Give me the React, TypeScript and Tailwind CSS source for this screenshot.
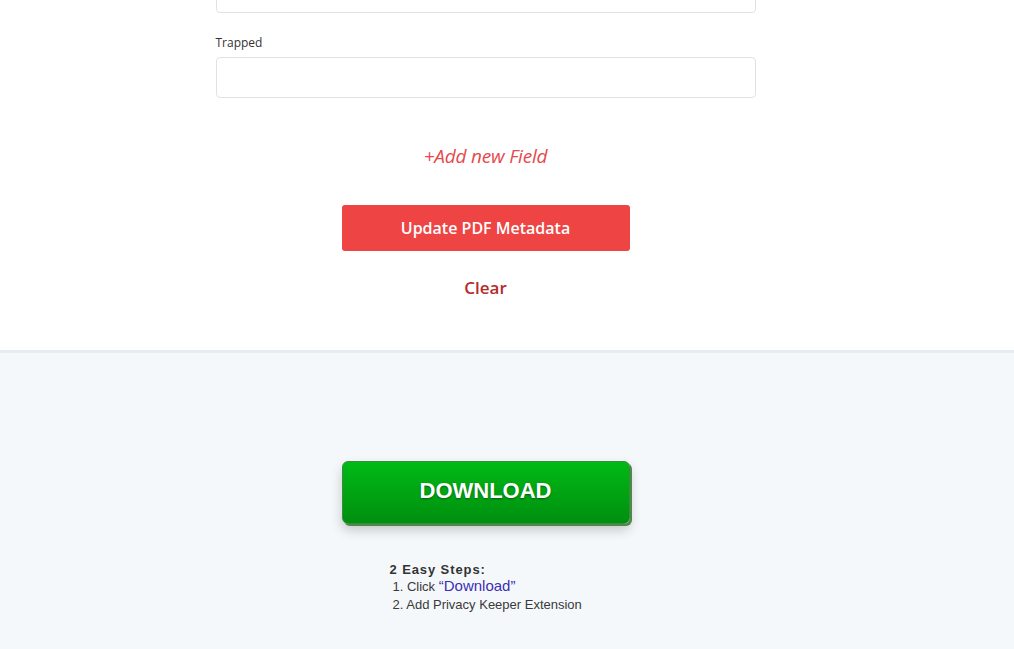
import React from "react";

export default function App() {
  return (
    <div className="w-[1014px] h-[649px] overflow-hidden bg-white">
      <div className="bg-white h-[350px] flex flex-col items-center pr-[43px]">
        <div className="w-[540px] mt-[-28px] h-[41px] border border-[#dee2e6] rounded-[4px] bg-white" />
        <div className="w-[540px] mt-[22px] text-[12px] leading-[16px] text-[#333] font-['Open_Sans',sans-serif]">
          Trapped
        </div>
        <div className="w-[540px] mt-[6px] h-[41px] border border-[#dee2e6] rounded-[4px] bg-white" />
        <div className="mt-[46px] text-[19px] leading-[24px] italic font-medium text-[#e5484d] font-['Open_Sans',sans-serif] tracking-[-0.2px]">
          +Add new Field
        </div>
        <button className="mt-[37px] w-[288px] h-[46px] rounded-[3px] bg-[#ef4444] text-white text-[16px] font-semibold font-['Open_Sans',sans-serif]">
          Update PDF Metadata
        </button>
        <div className="mt-[25px] text-[17px] leading-[24px] font-semibold text-[#b52a2a] font-['Open_Sans',sans-serif]">
          Clear
        </div>
      </div>
      <div className="h-[3px] bg-[#e6ecf1]" />
      <div className="bg-[#f5f8fb] h-[296px] flex flex-col items-center pr-[43px]">
        <button
          className="mt-[108px] w-[288px] h-[63px] rounded-[6px] border border-[#3d8a3d] bg-gradient-to-b from-[#00ba16] to-[#008f0f] text-white text-[22px] leading-[22px] pb-[4px] font-bold font-['Liberation_Sans',Arial,sans-serif] shadow-[2px_2px_0_#4c8a4c,0_6px_12px_rgba(0,0,0,0.2)] [text-shadow:0_1px_2px_rgba(0,0,0,0.4)]"
        >
          DOWNLOAD
        </button>
        <div className="mt-[38px] w-[234px] ml-[42px] font-['Liberation_Sans',Arial,sans-serif] text-[#3a3a3a] text-[13px] leading-[17px]">
          <div className="font-bold text-[13px] leading-[16px] tracking-[0.9px] text-[#333]">2 Easy Steps:</div>
          <div className="pl-[3px] leading-[16px]">
            1. Click <span className="text-[#3b2fb5] text-[15px]">“Download”</span>
          </div>
          <div className="pl-[3px] mt-[1px]">2. Add Privacy Keeper Extension</div>
        </div>
      </div>
    </div>
  );
}
